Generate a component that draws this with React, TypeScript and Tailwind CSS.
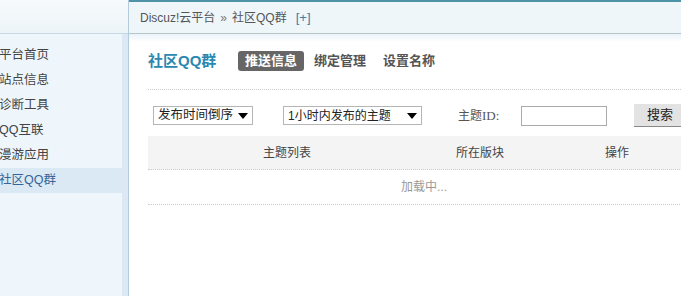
import React from "react";

const menu = ["平台首页", "站点信息", "诊断工具", "QQ互联", "漫游应用", "社区QQ群"];

function Arrow() {
  return (
    <span className="ml-auto mr-[4px] h-0 w-0 border-x-[5px] border-t-[6px] border-x-transparent border-t-black" />
  );
}

export default function App() {
  return (
    <div
      className="flex h-[296px] w-[681px] overflow-hidden bg-white text-[12px] text-[#333]"
      style={{ fontFamily: '"Liberation Sans", "Noto Sans CJK SC", sans-serif' }}
    >
      <aside className="flex w-[129px] shrink-0 flex-col border-r border-[#b3cbdb]">
        <div className="h-[34px] border-b border-[#c4d8e4] bg-gradient-to-b from-[#f6fafc] to-[#edf4f8]" />
        <div className="flex flex-1">
          <ul className="w-[122px] bg-[#eef6fb] pt-[9px]">
            {menu.map((m) => (
              <li
                key={m}
                className={
                  "flex h-[25px] items-center text-[12.5px] text-[#444] " +
                  (m === "社区QQ群" ? "bg-[#dbe9f4] text-[#336699]" : "")
                }
              >
                <span className="ml-[-1px]">{m}</span>
              </li>
            ))}
          </ul>
          <div className="flex-1 bg-[#dce9f4]" />
        </div>
      </aside>

      <main className="flex min-w-0 flex-1 flex-col">
        <div className="flex h-[34px] shrink-0 items-center border-t-2 border-b border-t-[#4e93a8] border-b-[#b5c6ca] bg-[#eef6fa] pl-[11px] text-[#555]">
          <span>Discuz!云平台</span>
          <span className="mx-[5px] text-[#777]">»</span>
          <span>社区QQ群</span>
          <span className="ml-[9px] text-[13px] text-[#3a7fa8]">[+]</span>
        </div>
        <div className="h-[8px] bg-gradient-to-b from-[#eaf3f9] to-white" />

        <div className="pl-[19px] pt-[9px]">
          <div className="flex h-[20px] items-center">
            <h2 className="w-[90px] text-[15px] font-bold text-[#2a88b0]">社区QQ群</h2>
            <div className="flex items-center gap-[3px] text-[13px] font-bold text-[#555]">
              <span className="rounded-[3px] bg-[#666] px-[7px] leading-[20px] text-white">推送信息</span>
              <span className="px-[7px] leading-[20px]">绑定管理</span>
              <span className="px-[7px] leading-[20px]">设置名称</span>
            </div>
          </div>

          <div className="mt-[18px] border-b border-dotted border-[#ccc]" />

          <div className="mt-[14px] flex h-[23px] items-center">
            <div className="ml-[5px] flex h-[19px] w-[100px] shrink-0 items-center border border-[#b5b5b5] pl-[4px] text-[12.5px] text-[#222]">
              发布时间倒序
              <Arrow />
            </div>
            <div className="ml-[30px] flex h-[19px] w-[139px] shrink-0 items-center border border-[#b5b5b5] pl-[4px] text-[12px] text-[#222]">
              1小时内发布的主题
              <Arrow />
            </div>
            <span className="ml-[36px] w-[63px] shrink-0 text-[#555]">
              主题<span style={{ fontFamily: '"Liberation Serif", serif' }} className="text-[13px]">ID:</span>
            </span>
            <div className="h-[20px] w-[86px] shrink-0 border border-[#aaa] bg-white" />
            <button className="ml-[27px] h-[23px] w-[52px] shrink-0 border-b border-[#888] bg-[#e3e3e3] text-[13px] text-[#222]">
              搜索
            </button>
          </div>

          <div className="mt-[9px] w-[552px] text-[12px] text-[#444]">
            <div className="flex h-[34px] items-center border-b border-dotted border-[#ccc] bg-[#f4f4f4]">
              <span className="w-[278px] text-center">主题列表</span>
              <span className="w-[108px] text-center">所在版块</span>
              <span className="w-[166px] text-center">操作</span>
            </div>
            <div className="flex h-[35px] items-center justify-center border-b border-dotted border-[#ccc] text-[#999]">
              加载中...
            </div>
          </div>
        </div>
      </main>
    </div>
  );
}
